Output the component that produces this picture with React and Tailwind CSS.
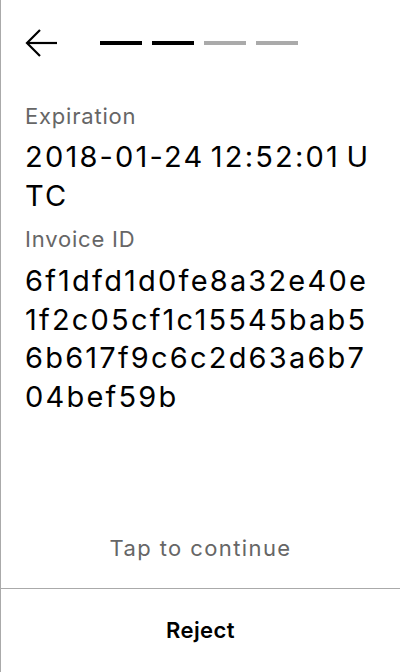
import React from 'react'

const steps = [true, true, false, false]

const App = () => {
  return (
    <div
      className="flex h-[672px] w-[400px] flex-col border-l border-[#aaaaaa] bg-white text-black"
      style={{ fontFamily: 'Inter, "Noto Sans", sans-serif' }}
    >
      <header className="flex h-[86px] items-center pl-[24px]">
        <button aria-label="Go back" className="flex h-[32px] w-[34px] items-center">
          <svg width="33" height="30" viewBox="0 0 33 30" fill="none" stroke="black" strokeWidth="2.2">
            <path d="M32 15H2" />
            <path d="M15 2L2 15l13 13" />
          </svg>
        </button>
        <div className="ml-[41px] flex gap-[10px]">
          {steps.map((done, i) => (
            <span
              key={i}
              className={done ? 'h-[4px] w-[42px] bg-black' : 'h-[4px] w-[42px] bg-[#aaaaaa]'}
            />
          ))}
        </div>
      </header>

      <main className="flex-1 px-[24px] pt-[16px]">
        <div className="text-[22px] leading-[28px] tracking-[0.8px] text-[#666666]">Expiration</div>
        <div className="mt-[8px] break-all text-[29px] leading-[38.5px] tracking-[2.2px] [word-spacing:-4px]">
          2018-01-24 12:52:01 UTC
        </div>
        <div className="mt-[10px] text-[22px] leading-[28px] tracking-[0.8px] text-[#666666]">Invoice ID</div>
        <div className="mt-[9px] break-all text-[29px] leading-[38.5px] tracking-[2.2px]">
          6f1dfd1d0fe8a32e40e1f2c05cf1c15545bab56b617f9c6c2d63a6b704bef59b
        </div>
      </main>

      <div className="pb-[26px] text-center text-[22px] leading-[28px] tracking-[1.4px] text-[#666666]">Tap to continue</div>

      <button className="flex h-[84px] items-center justify-center border-t border-[#aaaaaa] text-[22px] font-semibold tracking-[0.4px]">
        Reject
      </button>
    </div>
  )
}

export default App
